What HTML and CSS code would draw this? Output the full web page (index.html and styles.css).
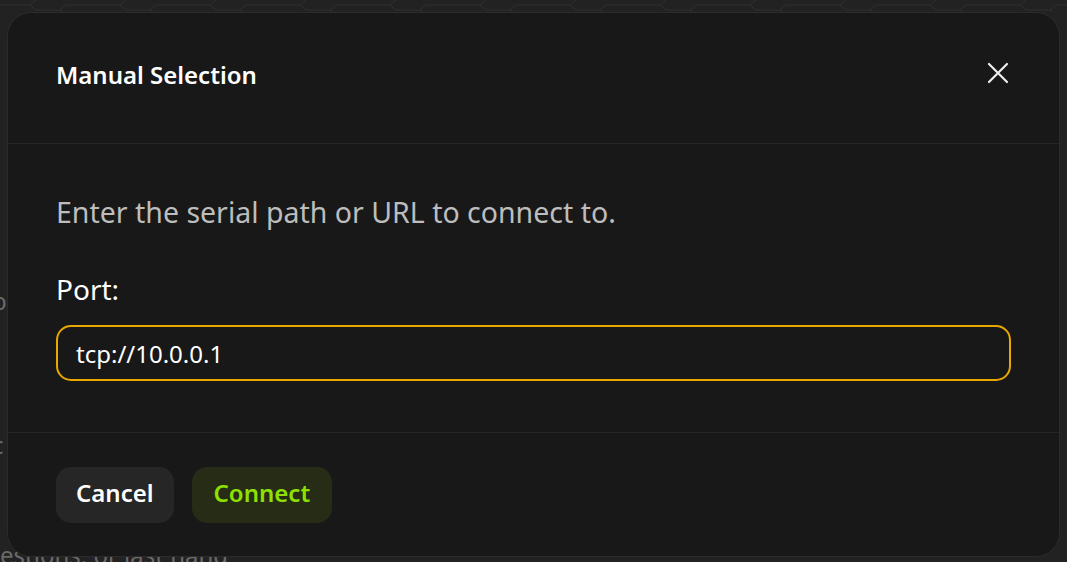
FILE: index.html
```html
<!DOCTYPE html>
<html>
<head>
  <title>Manual Selection</title>
  <meta charset="UTF-8">
  <link rel="stylesheet" href="styles.css">
</head>
<body>
  <div class="page">
    <svg class="hex-strip" width="100%" height="12">
      <defs>
        <pattern id="hex" width="90" height="24" patternUnits="userSpaceOnUse">
          <path d="M0 5 H30 L36 0 M30 5 L36 10 H60 L66 5 H90 M60 10 L66 15" fill="none" stroke="#2e2e2e" stroke-width="1"/>
        </pattern>
      </defs>
      <rect width="100%" height="12" fill="url(#hex)"/>
    </svg>
    <div class="page-text">
      <p class="side-line left-a">p</p>
      <p class="side-line left-b">c</p>
      <p class="bottom-line">estions, or last hand</p>
    </div>
  </div>

  <div class="modal">
    <div class="modal-header">
      <h3>Manual Selection</h3>
      <button class="close-btn" title="Close">
        <svg width="22" height="22" viewBox="0 0 22 22">
          <path d="M2 2 L20 20 M20 2 L2 20" stroke="#eeeeee" stroke-width="2.2" stroke-linecap="round"/>
        </svg>
      </button>
    </div>
    <div class="modal-body">
      <p class="hint">Enter the serial path or URL to connect to.</p>
      <label class="field-label" for="portInput">Port:</label>
      <input type="text" id="portInput" value="tcp://10.0.0.1">
    </div>
    <div class="modal-footer">
      <button class="btn btn-cancel">Cancel</button>
      <button class="btn btn-connect">Connect</button>
    </div>
  </div>
</body>
</html>
```

FILE: styles.css
```css
body {
  margin: 0;
  width: 1067px;
  height: 562px;
  overflow: hidden;
  background-color: #222222;
  font-family: "Noto Sans", "Open Sans", sans-serif;
}
.page {
  width: 100%;
  height: 100%;
}
.hex-strip {
  display: block;
}
.page-text {
  color: #6a6a6a;
  font-size: 24px;
}
.side-line {
  position: absolute;
  margin: 0;
}
.left-a {
  left: -8px;
  top: 284px;
}
.left-b {
  left: -8px;
  top: 428px;
}
.bottom-line {
  position: absolute;
  margin: 0;
  left: 0;
  top: 538px;
}
/* dialog */
.modal {
  position: absolute;
  left: 7px;
  top: 12px;
  width: 1051px;
  height: 543px;
  background-color: #181818;
  border: 1px solid #2b2b2b;
  border-radius: 24px;
  display: flex;
  flex-direction: column;
}
.modal-header {
  height: 130px;
  display: flex;
  align-items: center;
  justify-content: space-between;
  padding: 0 50px 0 48px;
  border-bottom: 1px solid #262626;
}
h3 {
  margin: -8px 0 0;
  font-size: 24px;
  font-weight: 600;
  color: #ffffff;
}
.close-btn {
  background: none;
  border: none;
  padding: 0;
  width: 22px;
  height: 22px;
  cursor: pointer;
  margin-top: -10px;
}
.close-btn svg {
  display: block;
}
.modal-body {
  height: 288px;
  padding: 0 48px;
  border-bottom: 1px solid #262626;
  display: flex;
  flex-direction: column;
}
.hint {
  margin: 49px 0 0;
  font-size: 28.5px;
  line-height: 38px;
  color: #bdbdbd;
}
.field-label {
  margin-top: 39px;
  font-size: 28px;
  line-height: 38px;
  color: #ffffff;
}
input {
  margin-top: 17px;
  height: 56px;
  box-sizing: border-box;
  padding: 0 18px;
  background-color: #181818;
  border: 2px solid #e8a800;
  border-radius: 15px;
  color: #ffffff;
  font-family: "Noto Sans", "Open Sans", sans-serif;
  font-size: 24px;
  outline: none;
}
.modal-footer {
  flex: 1;
  display: flex;
  align-items: center;
  gap: 18px;
  padding: 0 48px;
}
.btn {
  height: 56px;
  padding: 0 20px 5px;
  border: none;
  border-radius: 15px;
  font-family: "Noto Sans", "Open Sans", sans-serif;
  font-size: 24px;
  font-weight: 600;
  cursor: pointer;
}
.btn-cancel {
  background-color: #262626;
  color: #ffffff;
}
.btn-connect {
  padding: 0 22px 5px;
  background-color: #262c15;
  color: #8ee000;
}
```
